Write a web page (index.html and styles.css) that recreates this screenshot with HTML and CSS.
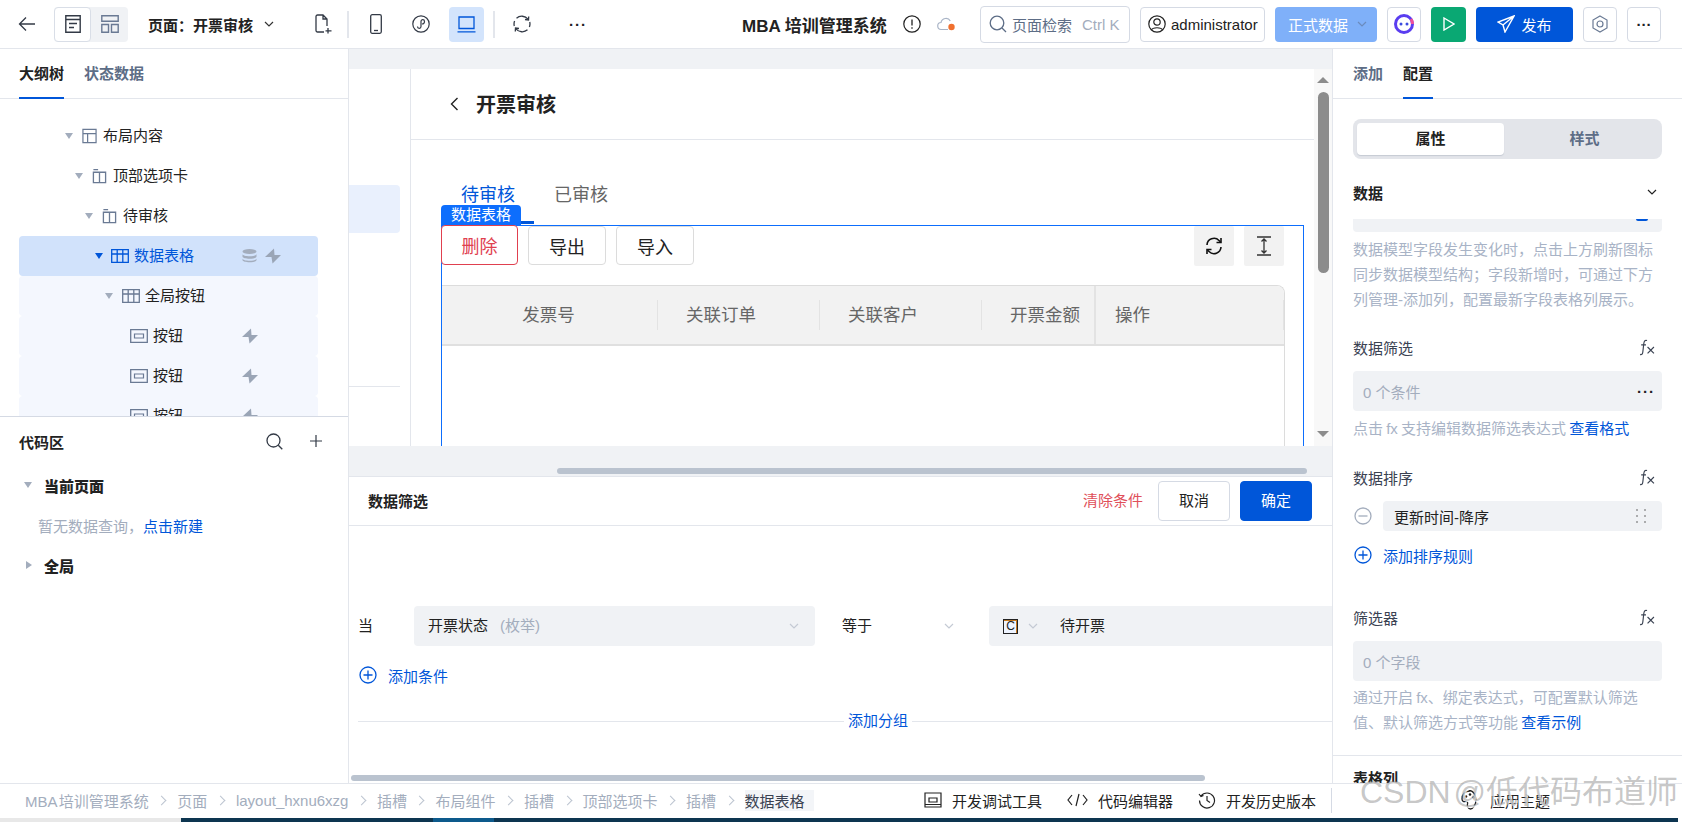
FILE: index.html
```html
<!DOCTYPE html>
<html lang="zh-CN">
<head>
<meta charset="utf-8">
<title>开票审核</title>
<link rel="stylesheet" href="styles.css">
</head>
<body>
<svg class="defs" width="0" height="0">
  <defs>
    <symbol id="chev" viewBox="0 0 12 12"><path d="M2 4l4 4 4-4" fill="none" stroke="currentColor" stroke-width="1.2"/></symbol>
    <symbol id="bolt" viewBox="0 0 16 16"><path d="M9 .5L0 9h6.500L7.500 15.500 16 7H9.500z" fill="#9aa5b6"/></symbol>
    <symbol id="fx" viewBox="0 0 16 16"><path d="M8.500 1.500C6.800.7 5.800 1.800 5.500 4L4.500 12.500c-.2 1.700-1.200 2.500-2.500 2M3 5.500h4.500" fill="none" stroke="#3a4252" stroke-width="1.100"/><path d="M9 7.500l6 6M15 7.500l-6 6" fill="none" stroke="#3a4252" stroke-width="1.100"/></symbol>
    <symbol id="tbl" viewBox="0 0 18 14"><path d="M.7.700h16.600v12.600H.7zM.7 5h16.600M6.200.7v12.600M11.800.7v12.600" fill="none" stroke="currentColor" stroke-width="1.300"/></symbol>
    <symbol id="cols" viewBox="0 0 16 16"><path d="M1.500 4h13v11h-13zM8 4v11M1.500 1.200h5" fill="none" stroke="#6a7a94" stroke-width="1.400"/></symbol>
    <symbol id="btn" viewBox="0 0 18 14"><path d="M.7.700h16.600v12.600H.7z" fill="none" stroke="#6a7a94" stroke-width="1.300"/><path d="M4.500 5h9v4h-9z" fill="none" stroke="#6a7a94" stroke-width="1.200"/></symbol>
    <symbol id="plusc" viewBox="0 0 18 18"><circle cx="9" cy="9" r="8" fill="none" stroke="#0056d9" stroke-width="1.300"/><path d="M9 4.500v9M4.500 9h9" stroke="#0056d9" stroke-width="1.300"/></symbol>
  </defs>
</svg>
<div class="app">
  <header class="topbar">
    <div class="ib back"><svg width="18" height="16" viewBox="0 0 18 16"><path d="M17 8H1.500M8 1.500L1.500 8 8 14.500" fill="none" stroke="#333a46" stroke-width="1.300"/></svg></div>
    <div class="toggle">
      <span class="toggle-on"><svg width="16" height="18" viewBox="0 0 16 18"><path d="M.8.800h14.400v16.400H.8zM.8 4.500h14.400M4 8.500h8M4 12.500h5" fill="none" stroke="#333a46" stroke-width="1.400"/></svg></span>
      <span class="toggle-off"><svg width="18" height="18" viewBox="0 0 18 18"><path d="M.8.800h16.400v5.500H.8zM.8 9.500h6.700v7.700H.8zM10.500 9.500h6.700v7.700h-6.700z" fill="none" stroke="#6a7a94" stroke-width="1.400"/></svg></span>
    </div>
    <div class="page-name">页面：开票审核</div>
    <svg class="page-chev" width="12" height="12"><use href="#chev"/></svg>
    <span class="ib newfile"><svg width="17" height="20" viewBox="0 0 17 20"><path d="M9 18H2.500A1.500 1.500 0 0 1 1 16.500v-14A1.500 1.500 0 0 1 2.500 1H8l4 4v7M8 1v4h4M13 14v5.500M10.500 16.800h6" fill="none" stroke="#333a46" stroke-width="1.300"/></svg></span>
    <i class="vsep s1"></i>
    <span class="ib phone"><svg width="12" height="20" viewBox="0 0 12 20"><rect x=".7" y=".7" width="10.600" height="18.600" rx="1.500" fill="none" stroke="#333a46" stroke-width="1.300"/><path d="M4 16.500h4" stroke="#333a46" stroke-width="1.300"/></svg></span>
    <span class="ib mini"><svg width="18" height="18" viewBox="0 0 18 18"><circle cx="9" cy="9" r="8.200" fill="none" stroke="#333a46" stroke-width="1.200"/><path d="M5.500 11.500c0 2.500 3.500 2.500 3.500 0v-5c0-2.500 3.500-2.500 3.500 0S10 9 10 9" fill="none" stroke="#333a46" stroke-width="1.200"/></svg></span>
    <span class="laptop"><svg width="19" height="17" viewBox="0 0 19 17"><path d="M2 1h15v11.500H2zM.5 15.800h18" fill="none" stroke="#0056d9" stroke-width="1.300"/></svg></span>
    <i class="vsep s2"></i>
    <span class="ib sync"><svg width="18" height="18" viewBox="0 0 18 18"><path d="M3.500 3.200A8 8 0 0 1 15 4.200M14.500 14.800A8 8 0 0 1 3 13.800M1.300 11A8 8 0 0 1 1.600 6M16.700 7a8 8 0 0 1-.3 5" fill="none" stroke="#333a46" stroke-width="1.300"/><path d="M12 4.500l3.500.5.200-3.500M6 13.500l-3.500-.5-.2 3.500" fill="none" stroke="#333a46" stroke-width="1.300"/></svg></span>
    <span class="dots d1">···</span>
    <div class="app-title">MBA 培训管理系统</div>
    <span class="ib info"><svg width="18" height="18" viewBox="0 0 18 18"><circle cx="9" cy="9" r="8.200" fill="none" stroke="#222" stroke-width="1.200"/><path d="M9 4.500v6M9 12.300v1.400" stroke="#222" stroke-width="1.300"/></svg></span>
    <span class="ib cloud"><svg width="19" height="16" viewBox="0 0 19 16"><path d="M11 13.500H4.500a3.500 3.500 0 0 1-.5-7 5 5 0 0 1 9.300-1.500" fill="none" stroke="#a9b4c6" stroke-width="1.200"/><circle cx="14.500" cy="11" r="3.200" fill="#f0702f"/></svg></span>
    <div class="search-box"><svg width="18" height="18" viewBox="0 0 18 18"><circle cx="8" cy="8" r="6.800" fill="none" stroke="#5d6d86" stroke-width="1.300"/><path d="M13 13l4 4" stroke="#5d6d86" stroke-width="1.300"/></svg><span class="sb-text">页面检索</span><span class="sb-key">Ctrl K</span></div>
    <div class="user-box"><svg width="18" height="18" viewBox="0 0 18 18"><circle cx="9" cy="9" r="8.200" fill="none" stroke="#222" stroke-width="1.200"/><circle cx="9" cy="7" r="3.200" fill="none" stroke="#222" stroke-width="1.200"/><path d="M3.500 15c1-3 10-3 11 0" fill="none" stroke="#222" stroke-width="1.200"/></svg><span>administrator</span></div>
    <div class="env">正式数据<svg width="12" height="12"><use href="#chev"/></svg></div>
    <div class="sq robot"><svg width="22" height="22" viewBox="0 0 22 22"><circle cx="11" cy="11" r="8.500" fill="none" stroke="#5a3df0" stroke-width="3"/><path d="M18 6a9 9 0 0 1 1.500 5" fill="none" stroke="#f0509a" stroke-width="3"/><circle cx="8" cy="11" r="1.500" fill="#3b4be0"/><circle cx="14" cy="11" r="1.500" fill="#3b4be0"/></svg></div>
    <div class="sq play"><svg width="12" height="14" viewBox="0 0 12 14"><path d="M1 1l10 6-10 6z" fill="none" stroke="#fff" stroke-width="1.400"/></svg></div>
    <div class="publish"><svg width="18" height="18" viewBox="0 0 18 18"><path d="M17 1L1 7l5 3 2 7zM17 1L6 10" fill="none" stroke="#fff" stroke-width="1.400"/></svg><span>发布</span></div>
    <div class="sq outline"><svg width="16" height="18" viewBox="0 0 16 18"><path d="M8 1l7 4v8l-7 4-7-4V5z" fill="none" stroke="#6a7a94" stroke-width="1.200"/><circle cx="8" cy="9" r="3" fill="none" stroke="#6a7a94" stroke-width="1.200"/></svg></div>
    <div class="sq outline more">···</div>
  </header>

  <main class="workspace">
    <aside class="left">
      <nav class="tabs">
        <span class="tab on">大纲树</span><span class="tab">状态数据</span>
      </nav>
      <div class="tree">
        <div class="row l1"><i class="tri"></i><svg class="ic15" width="15" height="16" viewBox="0 0 16 16"><path d="M1 1h14v14H1zM1 5.500h14M6 5.500V15" fill="none" stroke="#6a7a94" stroke-width="1.300"/></svg><span>布局内容</span></div>
        <div class="row l2"><i class="tri"></i><svg class="ic15" width="15" height="16"><use href="#cols"/></svg><span>顶部选项卡</span></div>
        <div class="row l3"><i class="tri"></i><svg class="ic15" width="15" height="16"><use href="#cols"/></svg><span>待审核</span></div>
        <div class="row l4 sel"><i class="tri blue"></i><svg class="ic18" width="18" height="14"><use href="#tbl"/></svg><span class="grow">数据表格</span><svg width="15" height="14" viewBox="0 0 15 14" class="db"><ellipse cx="7.500" cy="2.500" rx="7" ry="2.500" fill="#a3adbd"/><path d="M.5 5c0 3 14 3 14 0v2.500c0 3-14 3-14 0zM.5 9.500c0 3 14 3 14 0V11c0 3-14 3-14 0z" fill="#a3adbd"/></svg><svg class="bolt" width="16" height="16"><use href="#bolt"/></svg></div>
        <div class="row l5 child"><i class="tri"></i><svg class="ic18 slate" width="18" height="14"><use href="#tbl"/></svg><span>全局按钮</span></div>
        <div class="row l6 child"><svg class="ic18" width="18" height="14"><use href="#btn"/></svg><span class="grow">按钮</span><svg class="bolt solo" width="16" height="16"><use href="#bolt"/></svg></div>
        <div class="row l6 child"><svg class="ic18" width="18" height="14"><use href="#btn"/></svg><span class="grow">按钮</span><svg class="bolt solo" width="16" height="16"><use href="#bolt"/></svg></div>
        <div class="row l6 child"><svg class="ic18" width="18" height="14"><use href="#btn"/></svg><span class="grow">按钮</span><svg class="bolt solo" width="16" height="16"><use href="#bolt"/></svg></div>
      </div>
      <section class="code">
        <div class="code-head"><b>代码区</b><svg class="cs" width="17" height="17" viewBox="0 0 17 17"><circle cx="7.500" cy="7.500" r="6.500" fill="none" stroke="#333a46" stroke-width="1.300"/><path d="M12.300 12.300l4 4" stroke="#333a46" stroke-width="1.300"/></svg><svg class="cp" width="12" height="12" viewBox="0 0 12 12"><path d="M6 0v12M0 6h12" stroke="#333a46" stroke-width="1.200"/></svg></div>
        <div class="code-item"><i class="tri"></i><b>当前页面</b></div>
        <div class="code-empty">暂无数据查询，<a>点击新建</a></div>
        <div class="code-item"><i class="tri-r"></i><b>全局</b></div>
      </section>
    </aside>

    <div class="center">
      <div class="canvas">
        <div class="viewport">
          <div class="ghost-side"><div class="ghost-item"></div><div class="ghost-line"></div></div>
          <div class="page">
            <div class="page-head"><svg width="9" height="14" viewBox="0 0 9 14"><path d="M7.500 1L1.500 7l6 6" fill="none" stroke="#222" stroke-width="1.400"/></svg><h1>开票审核</h1></div>
            <div class="page-tabs"><span class="pt on">待审核</span><span class="pt">已审核</span></div>
            <div class="label-row"><span class="sel-label">数据表格</span><i class="label-bar"></i></div>
            <div class="selected">
              <div class="tools">
                <button class="b danger">删除</button><button class="b">导出</button><button class="b">导入</button>
                <span class="tool-gap"></span>
                <span class="tool"><svg width="20" height="20" viewBox="0 0 20 20"><path d="M3 9a7 7 0 0 1 12-4.500l1.500 1.500M17 11a7 7 0 0 1-12 4.500L3.500 14" fill="none" stroke="#111" stroke-width="1.600"/><path d="M17 2v4.500h-4.500M3 18v-4.500h4.500" fill="none" stroke="#111" stroke-width="1.600"/></svg></span>
                <span class="tool"><svg width="16" height="20" viewBox="0 0 16 20"><path d="M1 1h14M1 19h14M8 3v14M5.500 5.500L8 3l2.500 2.500M5.500 14.500L8 17l2.500-2.500" fill="none" stroke="#333" stroke-width="1.300"/></svg></span>
              </div>
              <div class="table">
                <div class="thead">
                  <span class="th c1">发票号</span><span class="th c2">关联订单</span><span class="th c2">关联客户</span><span class="th c3">开票金额</span><span class="th c4">操作</span>
                </div>
              </div>
            </div>
          </div>
          <div class="vscroll"><i class="up"></i><i class="thumb"></i><i class="down"></i></div>
        </div>
        <div class="hscroll"><i></i></div>
      </div>
      <div class="filter">
        <div class="filter-head"><b>数据筛选</b><span class="clear">清除条件</span><button class="fb">取消</button><button class="fb primary">确定</button></div>
        <div class="filter-body">
          <div class="cond">
            <span class="when">当</span>
            <div class="fselect"><span>开票状态</span><em>(枚举)</em><svg width="12" height="12"><use href="#chev"/></svg></div>
            <div class="fop"><span>等于</span><svg width="12" height="12"><use href="#chev"/></svg></div>
            <div class="fval"><span class="cbox">C</span><svg width="12" height="12"><use href="#chev"/></svg><span class="fv">待开票</span></div>
          </div>
          <div class="addc"><svg width="18" height="18"><use href="#plusc"/></svg><a>添加条件</a></div>
          <div class="addg"><a>添加分组</a></div>
        </div>
        <div class="bottom-scroll"><i></i></div>
      </div>
    </div>

    <aside class="rpanel">
      <nav class="tabs rtabs"><span class="tab">添加</span><span class="tab on">配置</span></nav>
      <div class="seg"><span class="seg-on">属性</span><span class="seg-off">样式</span></div>
      <div class="sec-head"><b>数据</b><svg width="12" height="12"><use href="#chev"/></svg></div>
      <div class="strip"><i></i></div>
      <p class="help h3l">数据模型字段发生变化时，点击上方刷新图标同步数据模型结构；字段新增时，可通过下方列管理-添加列，配置最新字段表格列展示。</p>
      <div class="fld-head"><span>数据筛选</span><svg width="17" height="17"><use href="#fx"/></svg></div>
      <div class="inp"><span>0 个条件</span><b class="idots">···</b></div>
      <p class="help one">点击 fx 支持编辑数据筛选表达式 <a>查看格式</a></p>
      <div class="fld-head sort"><span>数据排序</span><svg width="17" height="17"><use href="#fx"/></svg></div>
      <div class="sort-row"><svg width="18" height="18" viewBox="0 0 18 18"><circle cx="9" cy="9" r="8" fill="none" stroke="#a3adbd" stroke-width="1.300"/><path d="M4.500 9h9" stroke="#a3adbd" stroke-width="1.300"/></svg><div class="sort-inp"><span>更新时间-降序</span><svg width="14" height="16" viewBox="0 0 14 16"><path d="M3 1v2M3 7v2M3 13v2M11 1v2M11 7v2M11 13v2" stroke="#666" stroke-width="1"/></svg></div></div>
      <div class="add-sort"><svg width="18" height="18"><use href="#plusc"/></svg><a>添加排序规则</a></div>
      <div class="fld-head filt"><span>筛选器</span><svg width="17" height="17"><use href="#fx"/></svg></div>
      <div class="inp"><span>0 个字段</span></div>
      <p class="help two">通过开启 fx、绑定表达式，可配置默认筛选值、默认筛选方式等功能 <a>查看示例</a></p>
      <div class="rule"></div>
      <div class="cut-title">表格列</div>
    </aside>
  </main>

  <footer class="status">
    <div class="crumbs">
      <span class="crumb-app">MBA 培训管理系统</span><i></i><span>页面</span><i></i><span>layout_hxnu6xzg</span><i></i><span>插槽</span><i></i><span>布局组件</span><i></i><span>插槽</span><i></i><span>顶部选项卡</span><i></i><span>插槽</span><i></i><span class="last">数据表格</span>
    </div>
    <div class="st-actions">
      <span class="st"><svg width="18" height="16" viewBox="0 0 18 16"><path d="M1 1h16v14H1zM5 6h8v4H5zM1 12.500h16" fill="none" stroke="#222" stroke-width="1.200"/></svg>开发调试工具</span>
      <span class="st"><svg width="21" height="14" viewBox="0 0 21 14"><path d="M5 2L1 7l4 5M16 2l4 5-4 5M12 1L9 13" fill="none" stroke="#222" stroke-width="1.200"/></svg>代码编辑器</span>
      <span class="st"><svg width="18" height="18" viewBox="0 0 18 18"><path d="M3 5a7.500 7.500 0 1 1-1.500 4.500M1 3l2 2.500L5.500 4.500M9 5v4.500l3 2" fill="none" stroke="#222" stroke-width="1.200"/></svg>开发历史版本</span>
    </div>
    <i class="st-sep"></i>
    <span class="st theme"><svg width="17" height="20" viewBox="0 0 17 20"><path d="M8.500 1C4 1 1 4.500 1 9c0 2.500 2 3 3.500 2.500s2.500.5 2 2.500.5 5 3 5 5.500-4.500 5.500-9-2.500-9.500-6.500-9.500z" fill="none" stroke="#222" stroke-width="1.300"/><circle cx="5" cy="6.500" r="1.300" fill="#222"/><circle cx="9" cy="4.500" r="1.300" fill="#222"/><circle cx="12.500" cy="7.500" r="1.300" fill="#222"/></svg>应用主题</span>
  </footer>
  <div class="strip-bottom"><i class="sb-a"></i><i class="sb-b"></i><i class="sb-c"></i><i class="sb-d"></i></div>
  <div class="watermark">CSDN @低代码布道师</div>
</div>
</body>
</html>
```

FILE: styles.css
```css
* { box-sizing: border-box; }
html, body { margin: 0; padding: 0; }
body { font-family: "Liberation Sans", "Noto Sans CJK SC", sans-serif; font-size: 15px; color: #222; background: #fff; }
.defs { position: absolute; }
a { color: #0056d9; }
i, em { font-style: normal; }
svg { display: block; flex: none; }
.app { position: relative; width: 1682px; height: 822px; overflow: hidden; display: flex; flex-direction: column; }

/* top bar */
.topbar { height: 49px; flex: none; border-bottom: 1px solid #e3e6ec; display: flex; align-items: center; padding-left: 18px; }
.ib { display: flex; align-items: center; justify-content: center; }
.toggle { display: flex; height: 35px; width: 74px; margin-left: 18px; background: #f0f2f5; border-radius: 4px; }
.toggle-on { width: 37px; display: flex; align-items: center; justify-content: center; background: #fff; border: 1px solid #d9dee7; border-radius: 4px; }
.toggle-off { flex: 1; display: flex; align-items: center; justify-content: center; }
.page-name { margin-left: 20px; font-weight: 700; width: 105px; white-space: nowrap; }
.page-chev { margin-left: 10px; color: #333; }
.newfile { margin-left: 40px; }
.vsep { width: 2px; height: 27px; background: #e3e6ec; flex: none; }
.s1 { margin-left: 15px; }
.phone { margin-left: 21px; }
.mini { margin-left: 30px; }
.laptop { width: 35px; height: 35px; margin-left: 19px; border-radius: 4px; background: #d3e4fc; display: flex; align-items: center; justify-content: center; }
.s2 { margin-left: 9px; }
.sync { margin-left: 18px; }
.dots { font-weight: 700; letter-spacing: 1px; line-height: 1; }
.d1 { margin-left: 38px; width: 20px; }
.app-title { margin-left: 153px; width: 147px; font-size: 17px; font-weight: 700; white-space: nowrap; }
.info { margin-left: 14px; }
.cloud { margin-left: 16px; }
.search-box { margin-left: 24px; width: 150px; height: 37px; border: 1px solid #d5dae4; border-radius: 4px; display: flex; align-items: center; padding-left: 8px; }
.sb-text { color: #5d6d86; margin-left: 5px; }
.sb-key { color: #a3adbd; margin-left: 10px; white-space: nowrap; }
.user-box { margin-left: 10px; width: 125px; height: 35px; border: 1px solid #d5dae4; border-radius: 4px; display: flex; align-items: center; padding-left: 7px; gap: 5px; }
.env { margin-left: 10px; width: 102px; height: 35px; background: #7fb0f9; color: #fff; border-radius: 4px; display: flex; align-items: center; padding-left: 13px; gap: 8px; white-space: nowrap; }
.env svg { color: #6b8bbd; }
.sq { width: 34px; height: 35px; border-radius: 4px; display: flex; align-items: center; justify-content: center; margin-left: 10px; }
.robot, .outline { border: 1px solid #d5dae4; }
.play { width: 35px; background: #0aa873; }
.publish { margin-left: 10px; width: 97px; height: 35px; border-radius: 4px; background: #0056d9; color: #fff; display: flex; align-items: center; justify-content: center; gap: 6px; font-size: 15px; }
.more { font-weight: 700; }

/* workspace */
.workspace { display: flex; height: 734px; flex: none; }
.left { width: 349px; flex: none; border-right: 1px solid #e3e6ec; display: flex; flex-direction: column; }
.tabs { height: 50px; border-bottom: 1px solid #e3e6ec; display: flex; gap: 20px; padding-left: 19px; flex: none; }
.tab { height: 50px; line-height: 50px; font-weight: 700; color: #5d6d86; padding-top: 0; position: relative; }
.tab.on { color: #222; border-bottom: 2px solid #0056d9; }
.tree { height: 317px; flex: none; overflow: hidden; padding: 17px 30px 0 19px; }
.row { height: 40px; display: flex; align-items: center; border-radius: 4px; white-space: nowrap; }
.row > span { margin-bottom: 4px; }
.tri { width: 0; height: 0; flex: none; border-left: 4px solid transparent; border-right: 4px solid transparent; border-top: 6px solid #a3adbd; margin-right: 9px; }
.tri.blue { border-top-color: #0056d9; margin-right: 8px; }
.tri-r { width: 0; height: 0; flex: none; border-top: 4px solid transparent; border-bottom: 4px solid transparent; border-left: 6px solid #a3adbd; margin: 0 12px 0 2px; }
.ic15 { margin-right: 6px; }
.ic18 { margin-right: 5px; color: #0056d9; }
.slate { color: #6a7a94; }
.grow { flex: 1; }
.l1 { padding-left: 46px; }
.l2 { padding-left: 56px; }
.l3 { padding-left: 66px; }
.l4 { padding-left: 76px; }
.l5 { padding-left: 86px; }
.l6 { padding-left: 111px; }
.sel { background: #d1e2fb; color: #0056d9; }
.child { background: #f4f7fe; }
.db { margin-right: 8px; }
.bolt { margin-right: 37px; }
.bolt.solo { margin-right: 60px; }
.code { flex: 1; border-top: 1px solid #d5dae4; }
.code-head { height: 48px; padding: 0 19px; display: flex; align-items: center; }
.code-head b { flex: 1; font-weight: 700; }
.cp { margin: 0 7px 0 27px; }
.code-item { height: 40px; display: flex; align-items: center; padding-left: 24px; font-weight: 700; }
.code-item .tri { margin-right: 12px; }
.code-empty { height: 40px; line-height: 44px; padding-left: 38px; color: #a3adbd; }

/* center */
.center { width: 983px; flex: none; display: flex; flex-direction: column; }
.canvas { height: 428px; flex: none; background: #f0f2f5; padding-top: 20px; border-bottom: 1px solid #e3e6ec; display: flex; flex-direction: column; }
.viewport { height: 377px; flex: none; background: #fff; display: flex; overflow: hidden; }
.ghost-side { width: 62px; flex: none; border-right: 1px solid #e3e6ec; padding-top: 116px; }
.ghost-item { width: 51px; height: 48px; background: #e9f0fd; border-radius: 0 4px 4px 0; }
.ghost-line { width: 51px; height: 1px; background: #e3e6ec; margin-top: 153px; }
.page { flex: 1; min-width: 0; }
.page-head { height: 71px; border-bottom: 1px solid #e3e6ec; display: flex; align-items: center; padding-left: 39px; gap: 17px; }
.page-head h1 { margin: 0 0 1px; font-size: 20px; font-weight: 700; }
.page-tabs { display: flex; gap: 39px; padding: 42px 0 0 50px; height: 65px; font-size: 18px; color: #666; line-height: 26px; }
.pt.on { color: #0056d9; }
.label-row { display: flex; align-items: flex-end; height: 20px; margin-left: 30px; }
.sel-label { background: #0d6efd; color: #fff; width: 80px; height: 20px; line-height: 20px; text-align: center; border-radius: 4px 4px 0 0; font-size: 15px; }
.label-bar { width: 13px; height: 3px; background: #0056d9; margin-bottom: 1px; }
.selected { margin: 0 0 0 30px; width: 863px; height: 240px; border: 1px solid #0d6efd; border-width: 1px 1px 0 1px; }
.tools { display: flex; height: 40px; }
.b { width: 78px; height: 39px; margin: 0 10px 0 0; background: #fff; border: 1px solid #dcdcdc; border-radius: 4px; font: 18px "Liberation Sans", "Noto Sans CJK SC", sans-serif; color: #222; padding: 0; }
.danger { width: 77px; height: 40px; border-color: #e0404f; color: #e0404f; margin: -1px 10px 0 -1px; }
.tool-gap { flex: 1; }
.tool { width: 40px; height: 40px; background: #f2f2f2; margin-left: 10px; display: flex; align-items: center; justify-content: center; border-radius: 2px; }
.tool:last-child { margin-right: 19px; }
.table { margin: 19px 0 0; width: 843px; height: 200px; border: 1px solid #dcdcdc; border-left: 0; border-bottom: 0; border-radius: 0 8px 0 0; overflow: hidden; }
.thead { height: 60px; background: #f2f2f2; border-bottom: 2px solid #e0e0e0; display: flex; }
.th { height: 100%; line-height: 58px; color: #666; font-size: 17.500px; text-align: left; padding-left: 28px; position: relative; white-space: nowrap; flex: none; }
.th::after { content: ""; position: absolute; right: 0; top: 14px; height: 30px; width: 1px; background: #e3e3e3; }
.c1 { width: 216px; text-align: center; padding: 0 3px 0 0; }
.c2 { width: 162px; }
.c3 { width: 114px; }
.c3::after { top: 0; height: 100%; width: 2px; }
.c4 { width: 188px; padding-left: 19px; }
.vscroll { width: 18px; flex: none; background: #f8f8f8; display: flex; flex-direction: column; align-items: center; padding-top: 8px; }
.up { width: 0; height: 0; border: 6px solid transparent; border-top: 0; border-bottom: 6px solid #8c8c8c; }
.thumb { width: 11px; height: 181px; background: #8c8c8c; border-radius: 6px; margin-top: 9px; }
.down { width: 0; height: 0; border: 6px solid transparent; border-bottom: 0; border-top: 6px solid #8c8c8c; margin-top: 158px; }
.hscroll { flex: 1; padding: 22px 0 0 208px; }
.hscroll i { display: block; width: 750px; height: 6px; background: #bac3cf; border-radius: 3px; }

/* filter */
.filter { flex: 1; min-height: 0; display: flex; flex-direction: column; position: relative; }
.filter-head { height: 49px; border-bottom: 1px solid #e3e6ec; flex: none; display: flex; align-items: center; padding-left: 19px; }
.filter-head b { flex: 1; font-size: 15px; margin-bottom: 2px; }
.clear { color: #e0505a; margin: 0 15px 3px 0; }
.fb { width: 72px; height: 40px; background: #fff; border: 1px solid #d5dae4; border-radius: 4px; margin-right: 20px; font: 15px "Liberation Sans", "Noto Sans CJK SC", sans-serif; color: #222; padding: 0 0 3px; }
.fb:first-of-type { margin-right: 10px; }
.primary { background: #0056d9; border-color: #0056d9; color: #fff; }
.filter-body { flex: 1; overflow: hidden; padding: 80px 0 0 9px; }
.cond { display: flex; align-items: center; height: 40px; }
.when { width: 56px; }
.when, .fselect span, .fselect em, .fop span, .fv { margin-bottom: 4px; }
.fselect { width: 401px; height: 40px; background: #f0f2f5; border-radius: 4px; display: flex; align-items: center; padding: 0 15px 0 14px; }
.fselect em { color: #a3adbd; margin-left: 12px; flex: 1; }
.fselect svg, .fop svg, .fval svg { color: #c4cad4; }
.fop { width: 174px; display: flex; align-items: center; padding-left: 27px; }
.fop span { width: 101px; }
.fval { flex: 1; height: 40px; background: #f0f2f5; border-radius: 4px 0 0 4px; display: flex; align-items: center; padding-left: 14px; }
.cbox { width: 15px; height: 15px; border: 1px solid #222; background: #eef4ff; font-size: 12px; line-height: 13px; text-align: center; box-shadow: -1px 1px 0 #c87a20 inset; margin-right: 9px; }
.fv { margin-left: 21px; }
.addc { display: flex; align-items: center; gap: 11px; margin: 20px 0 0 1px; height: 18px; }
.addg { margin: 37px 0 0; height: 1px; background: #e3e6ec; text-align: center; position: relative; }
.addg a { position: absolute; left: 486px; top: -11px; background: #fff; padding: 0 4px; line-height: 22px; }
.bottom-scroll { height: 10px; flex: none; padding: 2px 0 0 2px; }
.bottom-scroll i { display: block; width: 854px; height: 6px; background: #bac3cf; border-radius: 3px; }

/* right */
.rpanel { flex: 1; border-left: 1px solid #e3e6ec; height: 734px; overflow: hidden; }
.rtabs { padding-left: 20px; }
.seg { margin: 20px 20px 0; height: 40px; background: #e3e5ea; border-radius: 8px; padding: 4px; display: flex; font-weight: 700; }
.seg-on { width: 147px; background: #fff; border-radius: 4px; text-align: center; line-height: 32px; box-shadow: 0 1px 1px #c5cad3; }
.seg-off { flex: 1; text-align: center; line-height: 32px; color: #5d6d86; padding-left: 7px; }
.sec-head { margin: 19px 24px 0 20px; height: 28px; display: flex; align-items: center; justify-content: space-between; }
.strip { margin: 13px 20px 0; height: 13px; background: #f0f2f5; border-radius: 0 0 4px 4px; position: relative; }
.strip i { position: absolute; left: 283px; top: 0; width: 12px; height: 2px; border-radius: 0 0 8px 8px; background: #0056d9; }
.help { margin: 0 20px; color: #a8b3c6; line-height: 25px; }
.h3l { margin-top: 5px; }
.fld-head { margin: 23px 27px 0 20px; height: 25px; display: flex; align-items: center; justify-content: space-between; color: #3a4252; }
.inp { margin: 11px 20px 0; height: 40px; background: #f0f2f5; border-radius: 4px; color: #a3adbd; display: flex; align-items: center; justify-content: space-between; padding: 0 7px 0 10px; }
.idots { color: #222; letter-spacing: 1px; }
.one { margin-top: 5px; word-spacing: -1px; }
.fld-head.sort { margin-top: 24px; }
.sort-row { margin: 11px 20px 0 21px; height: 30px; display: flex; align-items: center; gap: 11px; }
.sort-inp { flex: 1; height: 30px; background: #f0f2f5; border-radius: 4px; display: flex; align-items: center; justify-content: space-between; padding: 0 14px 0 11px; }
.add-sort { margin: 15px 0 0 21px; height: 18px; display: flex; align-items: center; gap: 11px; }
.fld-head.filt { margin-top: 41px; }
.two { margin-top: 4px; word-spacing: -1px; }
.rule { margin-top: 20px; height: 1px; background: #e3e6ec; }
.cut-title { margin: 11px 20px 0; font-weight: 700; line-height: 24px; }

/* status */
.status { height: 35px; flex: none; border-top: 1px solid #e3e6ec; display: flex; align-items: center; padding: 0 0 2px 25px; }
.crumbs { display: flex; align-items: center; color: #a3adbd; white-space: nowrap; width: 899px; }
.crumb-app { word-spacing: -2px; }
.crumbs i { width: 7px; height: 7px; border-top: 1px solid #bcc4d0; border-right: 1px solid #bcc4d0; transform: rotate(45deg); margin: 0 12px 0 9.500px; flex: none; }
.crumbs .last { color: #3a4252; background: #f3f5f8; padding-right: 9px; }
.st-actions { display: flex; gap: 25px; }
.st { display: flex; align-items: center; gap: 10px; white-space: nowrap; }
.st-sep { width: 1px; height: 25px; background: #d5dae4; margin-left: 15px; }
.theme { margin-left: 129px; gap: 12px; }
.strip-bottom { height: 4px; flex: none; display: flex; }
.sb-a { width: 181px; background: #e8e8e8; }
.sb-b { width: 252px; background: #0d3550; }
.sb-c { width: 61px; background: #0d5a8c; }
.sb-d { width: 1184px; background: #0d3550; }

/* overlay */
.watermark { position: absolute; left: 1360px; top: 772px; font-size: 32px; line-height: 40px; white-space: nowrap; word-spacing: -6px; color: rgba(130,130,130,.45); text-shadow: 1px 1px 0 rgba(255,255,255,.8); font-family: "Liberation Sans", "Noto Sans CJK SC", sans-serif; }
```
